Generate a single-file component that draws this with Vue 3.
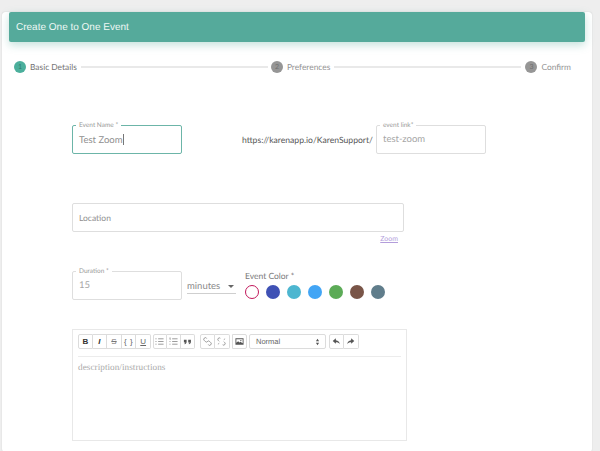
<script setup>
const steps = [
  { n: 1, label: "Basic Details", active: true },
  { n: 2, label: "Preferences" },
  { n: 3, label: "Confirm" },
];

const colors = ["#3f51b5", "#4db6d0", "#42a5f5", "#5cab57", "#795548", "#607d8b"];
</script>

<template>
  <div class="page">
    <div class="card">
      <div class="card-header">Create One to One Event</div>

      <div class="stepper">
        <template v-for="(s, i) in steps" :key="s.n">
          <div class="step">
            <span class="step-num" :class="{ active: s.active }">{{ s.n }}</span>
            <span class="step-label">{{ s.label }}</span>
          </div>
          <div v-if="i < steps.length - 1" class="step-line"></div>
        </template>
      </div>

      <div class="form">
        <div class="row row-name">
          <div class="field field-short focused">
            <span class="field-label">Event Name *</span>
            <span class="field-value">Test Zoom<i class="caret"></i></span>
          </div>
          <span class="url-prefix">https://karenapp.io/KarenSupport/</span>
          <div class="field field-short">
            <span class="field-label">event link*</span>
            <span class="field-value muted">test-zoom</span>
          </div>
        </div>

        <div class="field field-location">
          <span class="field-value location">Location</span>
        </div>
        <div class="zoom-row"><a class="zoom-link">Zoom</a></div>

        <div class="row row-duration">
          <div class="field field-short">
            <span class="field-label">Duration *</span>
            <span class="field-value muted">15</span>
          </div>
          <div class="unit-select">
            <span>minutes</span>
            <span class="unit-arrow"></span>
          </div>
          <div class="color-picker">
            <div class="color-title">Event Color *</div>
            <div class="color-list">
              <span class="swatch swatch-selected"></span>
              <span
                v-for="c in colors"
                :key="c"
                class="swatch"
                :style="{ background: c }"
              ></span>
            </div>
          </div>
        </div>

        <div class="editor">
          <div class="toolbar">
            <div class="tool-group">
              <button type="button" class="tool bold">B</button>
              <button type="button" class="tool italic">I</button>
              <button type="button" class="tool strike">S</button>
              <button type="button" class="tool code">{ }</button>
              <button type="button" class="tool under">U</button>
            </div>
            <div class="tool-group group-lists">
              <button type="button" class="tool">
                <svg viewBox="0 0 10 10"><path d="M3.500 2h6M3.500 5h6M3.500 8h6" /><path d="M.5 2h1.200M.5 5h1.200M.5 8h1.200" /></svg>
              </button>
              <button type="button" class="tool">
                <svg viewBox="0 0 10 10"><path d="M3.500 2h6M3.500 5h6M3.500 8h6" /><path d="M.6 1.200l.7-.4v2.400M.5 5h1.200M.5 8h1.200" stroke-width=".7" /></svg>
              </button>
              <button type="button" class="tool">
                <svg viewBox="0 0 10 10"><path class="solid" d="M1 3h3v2.600C4 7 3 7.800 1.800 8L1.500 7.200c.6-.2 1-.6 1-1.200H1zM5.800 3h3v2.600c0 1.400-1 2.200-2.200 2.400l-.3-.8c.6-.2 1-.6 1-1.200H5.800z" /></svg>
              </button>
            </div>
            <div class="tool-group group-links">
              <button type="button" class="tool">
                <svg viewBox="0 0 10 10"><path d="M4.200 1.600l-.3-.3a1.700 1.700 0 0 0-2.500 0 1.700 1.700 0 0 0 0 2.500l1.200 1.200a1.700 1.700 0 0 0 2.500 0" /><path d="M5.800 8.400l.3.3a1.700 1.700 0 0 0 2.500 0 1.700 1.700 0 0 0 0-2.500L7.400 5a1.700 1.700 0 0 0-2.500 0" /></svg>
              </button>
              <button type="button" class="tool">
                <svg viewBox="0 0 10 10"><path d="M3.700 1.400a1.700 1.700 0 0 0-2.300.1 1.700 1.700 0 0 0 0 2.300l1 1" /><path d="M6.300 8.600a1.700 1.700 0 0 0 2.300-.1 1.700 1.700 0 0 0 0-2.300l-1-1" /><path d="M1 8l1.500-1M7.500 3L9 2" stroke-width=".7" /></svg>
              </button>
            </div>
            <div class="tool-group group-media">
              <button type="button" class="tool">
                <svg viewBox="0 0 10 10"><path class="solid" fill-rule="evenodd" d="M.5 1.500h9v7h-9zM1.500 2.500v4l2-1.700 1.500 1.200 1-.8 2.500 1.800V2.500z" /><circle class="solid" cx="6.500" cy="4" r=".8" /></svg>
              </button>
            </div>
            <div class="tool-select">
              <span>Normal</span>
              <svg viewBox="0 0 6 10"><path class="solid" d="M3 1l2 3H1zM3 9L1 6h4z" /></svg>
            </div>
            <div class="tool-group group-history">
              <button type="button" class="tool">
                <svg viewBox="0 0 10 10"><path class="solid" d="M4.300 1.500L.8 4.500l3.500 3V5.700c2 0 3.400.6 4.400 2.300-.3-2.600-1.800-4.200-4.400-4.500z" /></svg>
              </button>
              <button type="button" class="tool">
                <svg viewBox="0 0 10 10"><path class="solid" d="M5.700 1.500l3.500 3-3.500 3V5.700c-2 0-3.400.6-4.400 2.300.3-2.600 1.800-4.200 4.400-4.500z" /></svg>
              </button>
            </div>
          </div>
          <div class="editor-body">description/instructions</div>
        </div>
      </div>
    </div>
  </div>
</template>

<style scoped>
.page {
  height: 451px;
  padding-top: 22px;
  box-sizing: border-box;
  overflow: hidden;
  background: #eeeeee;
  font-family: "Lato", "Open Sans", sans-serif;
  text-rendering: geometricPrecision;
}

.card {
  width: 590px;
  height: 440px;
  margin-left: 2px;
  background: #fff;
  border-radius: 3px;
  box-shadow: 0 0 1px rgba(0, 0, 0, 0.25);
}

.card-header {
  height: 30px;
  margin: -10px 7px 0;
  position: relative;
  padding-left: 7px;
  display: flex;
  align-items: center;
  background: #55aa9b;
  border-radius: 2px;
  box-shadow: 0 3px 8px rgba(85, 170, 155, 0.35);
  color: #eef8f5;
  font-family: "Liberation Sans", sans-serif;
  font-size: 10px;
}

.stepper {
  display: flex;
  align-items: center;
  margin-top: 19px;
  padding: 0 21px 0 12px;
}

.step {
  display: flex;
  align-items: center;
  gap: 4px;
}

.step-num {
  width: 12px;
  height: 12px;
  display: grid;
  place-items: center;
  border-radius: 50%;
  background: #969696;
  color: #6f6f6f;
  font-size: 7px;
}

.step-num.active {
  background: #4baf9c;
  color: #2e7d6e;
}

.step-label {
  color: #949494;
  font-size: 8.4px;
}

.step-num.active + .step-label {
  color: #757575;
}

.step-line {
  flex: 1;
  height: 2px;
  margin: 0 4px;
  background: #e9e9e9;
}

.step-line:nth-of-type(2) {
  margin-right: 3px;
}

.form {
  padding: 52px 0 0 70px;
}

.row {
  display: flex;
  align-items: center;
}

.field {
  position: relative;
  display: flex;
  align-items: center;
  box-sizing: border-box;
  height: 29px;
  padding-left: 6px;
  border: 1px solid #dedede;
  border-radius: 2px;
  background: #fff;
}

.field-short {
  width: 110px;
}

.field.focused {
  border-color: #6cb5a8;
}

.field-label {
  position: absolute;
  top: -5px;
  left: 3px;
  padding: 0 3px;
  background: #fff;
  color: #999;
  font-size: 6.5px;
  line-height: 9px;
}

.field-value {
  color: #8f8f8f;
  font-size: 9.5px;
}

.field-value.muted {
  color: #a6a6a6;
}

.field-value.location {
  color: #8f8f8f;
  font-size: 8.5px;
}

.caret {
  display: inline-block;
  width: 1px;
  height: 11px;
  vertical-align: -2px;
  background: #777;
}

.url-prefix {
  width: 134px;
  margin-left: 60px;
  color: #555;
  font-size: 8.6px;
  white-space: nowrap;
}

.field-location {
  width: 332px;
  margin-top: 49px;
}

.zoom-row {
  width: 326px;
  margin-top: 3px;
  text-align: right;
  font-size: 7px;
  line-height: 9px;
}

.zoom-link {
  color: #b39ddb;
  text-decoration: underline;
}

.row-duration {
  margin-top: 27px;
  align-items: flex-start;
}

.unit-select {
  width: 49px;
  height: 23px;
  margin: 0 9px 0 5px;
  padding-top: 8px;
  display: flex;
  align-items: center;
  justify-content: space-between;
  box-sizing: border-box;
  border-bottom: 1px solid #cfcfcf;
  color: #8a8a8a;
  font-size: 9.5px;
}

.unit-arrow {
  width: 0;
  height: 0;
  margin-right: 2px;
  border-left: 3px solid transparent;
  border-right: 3px solid transparent;
  border-top: 3px solid #666;
}

.color-title {
  color: #7a7a7a;
  font-size: 8.5px;
  line-height: 11px;
}

.color-list {
  display: flex;
  gap: 7px;
  margin-top: 3px;
}

.swatch {
  width: 14px;
  height: 14px;
  box-sizing: border-box;
  border-radius: 50%;
}

.swatch-selected {
  border: 1.5px solid #c2185b;
}

.editor {
  width: 335px;
  height: 112px;
  margin-top: 29px;
  box-sizing: border-box;
  padding: 4px 5px 0;
  border: 1px solid #e8e8e8;
}

.toolbar {
  display: flex;
  align-items: center;
  gap: 2px;
  height: 15px;
  padding-bottom: 7px;
  border-bottom: 1px solid #ececec;
}

.tool-group {
  display: flex;
}

.tool {
  width: 14.6px;
  height: 15px;
  padding: 0;
  display: grid;
  place-items: center;
  border: 1px solid #dcdcdc;
  border-left-width: 0;
  background: #fff;
  color: #333;
  font-family: "Liberation Sans", sans-serif;
  font-size: 8px;
}

.tool:first-child {
  border-left-width: 1px;
  border-radius: 2px 0 0 2px;
}

.tool:last-child {
  border-radius: 0 2px 2px 0;
}

.group-lists .tool {
  width: 14px;
}

.group-links {
  margin-left: 3px;
}

.group-links .tool,
.group-media .tool,
.group-history .tool {
  width: 15px;
}

.group-history {
  margin-left: 1px;
}

.tool svg {
  width: 9px;
  height: 9px;
  fill: none;
  stroke: #777;
  stroke-width: 0.8;
}

.tool svg .solid,
.tool-select svg .solid {
  fill: #555;
  stroke: none;
}

.bold {
  font-weight: 700;
}

.italic {
  font-style: italic;
  font-weight: 700;
}

.strike {
  color: #777;
  text-decoration: line-through;
}

.code {
  color: #666;
  letter-spacing: 0.5px;
}

.under {
  color: #666;
  text-decoration: underline;
}

.tool-select {
  width: 77px;
  height: 15px;
  padding: 0 5px 0 6px;
  display: flex;
  align-items: center;
  justify-content: space-between;
  box-sizing: border-box;
  border: 1px solid #dcdcdc;
  border-radius: 2px;
  color: #666;
  font-family: "Liberation Sans", sans-serif;
  font-size: 7.5px;
}

.tool-select svg {
  width: 5px;
  height: 8px;
}

.editor-body {
  margin-top: 5px;
  color: #aaa;
  font-family: "Liberation Serif", serif;
  font-size: 9.2px;
  letter-spacing: 0.05px;
}
</style>

<style>
html,
body {
  margin: 0;
  height: 451px;
  overflow: hidden;
  background: #eeeeee;
}
</style>
